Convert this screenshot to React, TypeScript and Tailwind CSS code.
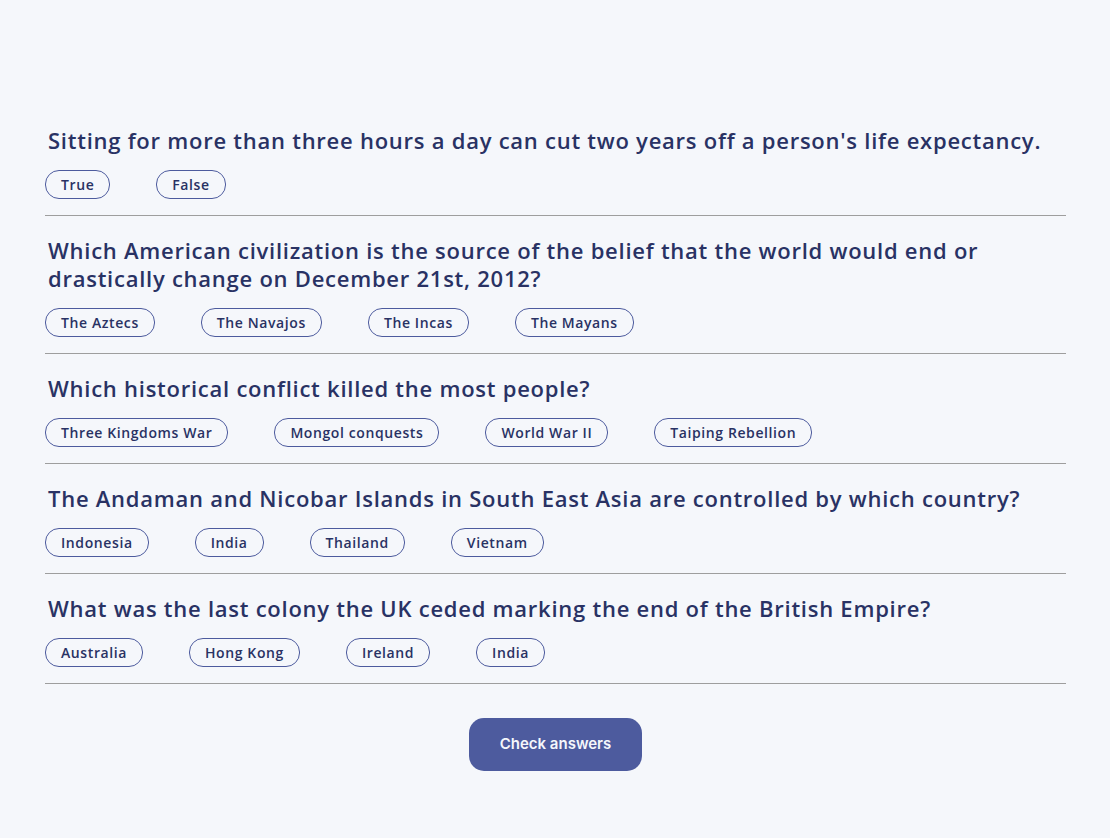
import React from 'react';

const questions = [
  {
    q: "Sitting for more than three hours a day can cut two years off a person's life expectancy.",
    a: ['True', 'False'],
  },
  {
    q: 'Which American civilization is the source of the belief that the world would end or drastically change on December 21st, 2012?',
    a: ['The Aztecs', 'The Navajos', 'The Incas', 'The Mayans'],
  },
  {
    q: 'Which historical conflict killed the most people?',
    a: ['Three Kingdoms War', 'Mongol conquests', 'World War II', 'Taiping Rebellion'],
  },
  {
    q: 'The Andaman and Nicobar Islands in South East Asia are controlled by which country?',
    a: ['Indonesia', 'India', 'Thailand', 'Vietnam'],
  },
  {
    q: 'What was the last colony the UK ceded marking the end of the British Empire?',
    a: ['Australia', 'Hong Kong', 'Ireland', 'India'],
  },
];

const Question = ({ q, a }: { q: string; a: string[] }) => (
  <div className="border-b border-[#9e9e9e]">
    <h2 className="pl-[3px] pt-[20px] text-[22px] leading-[28px] font-semibold text-[#293264] tracking-[0.75px]">
      {q}
    </h2>
    <div className="flex gap-[46px] mt-[16px] mb-[16px]">
      {a.map((ans) => (
        <button
          key={ans}
          className="h-[29px] px-[15px] rounded-[14px] border border-[#4D5B9E] text-[14px] font-semibold text-[#293264] tracking-[0.6px]"
        >
          {ans}
        </button>
      ))}
    </div>
  </div>
);

export default function App() {
  return (
    <div
      className="min-h-[838px] bg-[#F5F7FB] px-[45px] pt-[106px]"
      style={{ fontFamily: '"Open Sans", sans-serif' }}
    >
      <div className="w-[1021px]">
        {questions.map((item) => (
          <Question key={item.q} q={item.q} a={item.a} />
        ))}
        <div className="flex justify-center mt-[34px]">
          <button
            className="w-[173px] h-[53px] rounded-[15px] bg-[#4D5B9E] text-[#F5F7FB] text-[15px] font-semibold"
            style={{ fontFamily: 'Inter, sans-serif' }}
          >
            Check answers
          </button>
        </div>
      </div>
    </div>
  );
}
